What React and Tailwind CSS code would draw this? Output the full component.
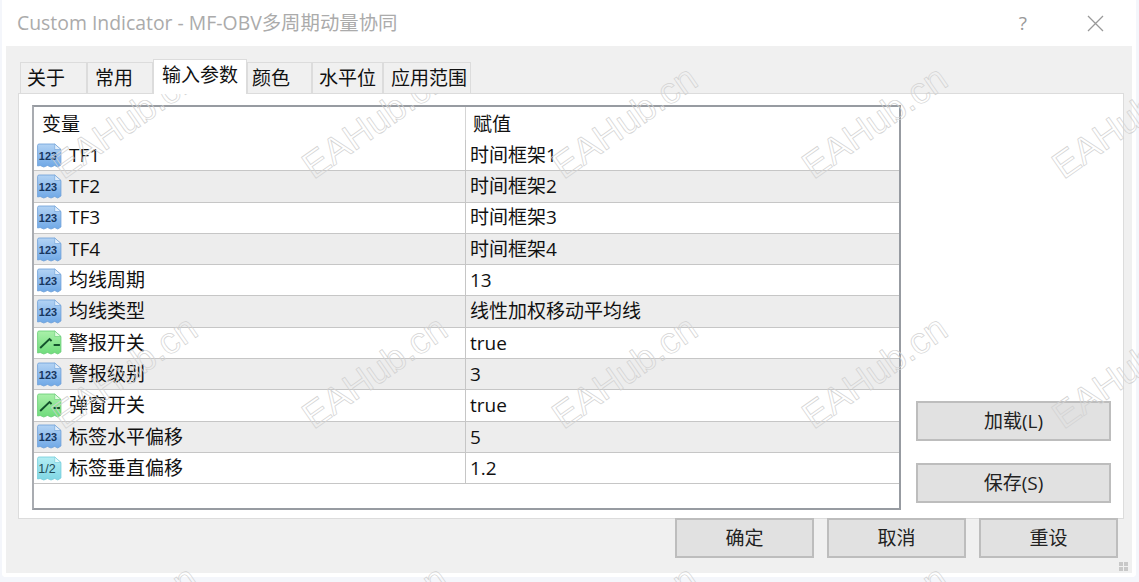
const FONT = "font-['Open_Sans','Noto_Sans_CJK_SC',sans-serif]";

const rows = [
  ['TF1', '时间框架1', 'num'],
  ['TF2', '时间框架2', 'num'],
  ['TF3', '时间框架3', 'num'],
  ['TF4', '时间框架4', 'num'],
  ['均线周期', '13', 'num'],
  ['均线类型', '线性加权移动平均线', 'num'],
  ['警报开关', 'true', 'bool'],
  ['警报级别', '3', 'num'],
  ['弹窗开关', 'true', 'bool'],
  ['标签水平偏移', '5', 'num'],
  ['标签垂直偏移', '1.2', 'frac'],
];

const tabs = [
  { label: '关于', cls: 'w-[67px] pl-[6px]' },
  { label: '常用', cls: 'w-[66px] pl-[7px]' },
  { label: '输入参数', cls: 'w-[94px] pl-[8px]', active: true },
  { label: '颜色', cls: 'w-[65px] pl-[4px]' },
  { label: '水平位', cls: 'w-[71px] pl-[6px]' },
  { label: '应用范围', cls: 'w-[88px] pl-[7px]' },
];

const marks = [
  [67, 148], [317, 148], [567, 148], [817, 148], [1067, 148],
  [67, 398], [317, 398], [567, 398], [817, 398], [1067, 398],
  [67, 648], [317, 648], [567, 648], [817, 648],
];

const iconColors = {
  num: { top: '#b3d3f4', bottom: '#6fa8e6', edge: '#6d9fd8', fold: '#e2eefb', ink: '#17365f' },
  bool: { top: '#a9f0a9', bottom: '#6fdc7c', edge: '#66cc74', fold: '#e2fbe2', ink: '#14532d' },
  frac: { top: '#b4eef4', bottom: '#7fd6e4', edge: '#72ccda', fold: '#e4f9fb', ink: '#1f4a56' },
};

function ParamIcon({ type }) {
  const c = iconColors[type];
  const gid = `grad-${type}`;
  return (
    <svg width="28" height="27" viewBox="0 0 27 27" preserveAspectRatio="none" className="shrink-0">
      <defs>
        <linearGradient id={gid} x1="0" y1="0" x2="0" y2="1">
          <stop offset="0" stopColor={c.top} />
          <stop offset="1" stopColor={c.bottom} />
        </linearGradient>
      </defs>
      <path
        d="M2.5 3.5 Q2.5 2 4 2 H19 L25 7.5 V23 L22 25 L19 23.5 L15.5 25 L12 23.5 L8.5 25 L5 23.5 L2.5 24 Z"
        fill={`url(#${gid})`}
        stroke={c.edge}
        strokeWidth="0.8"
      />
      <path d="M19 2 V7.5 H25 Z" fill={c.fold} stroke={c.edge} strokeWidth="0.6" />
      {type === 'num' && (
        <text x="12.5" y="18" textAnchor="middle" fontSize="10.5" fontWeight="700" fill={c.ink} fontFamily="Liberation Sans, sans-serif">
          123
        </text>
      )}
      {type === 'frac' && (
        <text x="11.5" y="18" textAnchor="middle" fontSize="12" fill={c.ink} fontFamily="Liberation Sans, sans-serif">
          1/2
        </text>
      )}
      {type === 'bool' && (
        <path d="M5 19 L14 10 L16 12 M18 16 H24" fill="none" stroke={c.ink} strokeWidth="1.8" />
      )}
    </svg>
  );
}

function Btn({ label, className }) {
  return (
    <div className={`flex h-[40px] items-center justify-center border-2 border-[#bdbdbd] bg-[#e1e1e1] text-[19px] text-[#222] ${className}`}>
      {label}
    </div>
  );
}

export default function App() {
  return (
    <div className={`relative h-[582px] w-[1139px] overflow-hidden bg-[#f4f6fb] pl-[2px] ${FONT}`}>
      <div className="h-[577px] w-[1134px] rounded-b-[4px] border-x-4 border-b-4 border-white bg-[#f0f0f0]">
        <div className="flex h-[46px] items-center justify-between bg-white pl-[11px] pr-[28px]">
          <span className="text-[19.4px] text-[#ababab]">Custom Indicator - MF-OBV多周期动量协同</span>
          <div className="flex items-center gap-[60px]">
            <span className="text-[19px] text-[#999]">?</span>
            <svg width="17" height="17" viewBox="0 0 17 17" fill="none" stroke="#999" strokeWidth="1.3">
              <path d="M1 1 L16 16 M16 1 L1 16" />
            </svg>
          </div>
        </div>

        <div className="px-[12px]">
          {/* tab strip */}
          <div className="relative z-10 flex h-[47px] items-end pl-[2px]">
            {tabs.map((t) =>
              t.active ? (
                <div key={t.label} className={`-mb-px flex h-[35px] items-center border border-b-0 border-[#dcdcdc] bg-white pb-[4px] text-[19px] text-[#111] ${t.cls}`}>
                  {t.label}
                </div>
              ) : (
                <div key={t.label} className={`flex h-[31px] items-center border border-b-0 border-[#dcdcdc] bg-[#f0f0f0] text-[19px] text-[#111] ${t.cls}`}>
                  {t.label}
                </div>
              )
            )}
          </div>

          {/* panel */}
          <div className="flex h-[426px] w-[1106px] border border-[#dcdcdc] bg-white pl-[13px] pt-[11px]">
            <div className="h-[405px] w-[869px] border-2 border-t-[#979ba1] border-r-[#979ba1] border-b-[#979ba1] border-l-[#a9acb1]">
              <div className="flex h-[33px] text-[19px] text-[#111]">
                <div className="w-[431px] pl-[8px] pt-[3px]">变量</div>
                <div className="border-l border-[#d5d5d5] pl-[7px] pt-[3px]">赋值</div>
              </div>
              {rows.map(([name, value, type], i) => (
                <div key={name} className={`flex h-[31.3px] items-center border-b border-[#c6c6c6] text-[19px] text-[#111] ${i % 2 ? 'bg-[#ededed]' : 'bg-white'}`}>
                  <div className="flex h-full w-[431px] items-center gap-[6px] pl-[1px]">
                    <ParamIcon type={type} />
                    <span>{name}</span>
                  </div>
                  <div className="flex h-full items-center border-l border-[#c6c6c6] pl-[4px]">{value}</div>
                </div>
              ))}
            </div>
            <div className="flex flex-col gap-[22px] pl-[15px] pt-[296px]">
              <Btn label="加载(L)" className="w-[195px]" />
              <Btn label="保存(S)" className="w-[195px]" />
            </div>
          </div>

          {/* dialog buttons */}
          <div className="relative z-10 -mt-px flex justify-end gap-[13px] pr-[2px]">
            <Btn label="确定" className="w-[139px]" />
            <Btn label="取消" className="w-[139px]" />
            <Btn label="重设" className="w-[139px]" />
          </div>
        </div>
      </div>

      {/* size grip */}
      <div className="absolute left-[1119px] top-[562px] grid grid-cols-2 gap-px">
        <span className="size-[4px] bg-[#c8c8c8]" />
        <span className="size-[4px] bg-[#c8c8c8]" />
        <span className="size-[4px] bg-[#c8c8c8]" />
        <span className="size-[4px] bg-[#c8c8c8]" />
      </div>

      {/* watermark */}
      {marks.map(([x, y]) => (
        <span
          key={`${x}-${y}`}
          className="pointer-events-none absolute origin-bottom-left -rotate-[35deg] whitespace-nowrap font-['Liberation_Sans',sans-serif] text-[37px] leading-none text-transparent [-webkit-text-stroke:0.7px_#d2d2d2]"
          style={{ left: x, top: y }}
        >
          EAHub.cn
        </span>
      ))}
    </div>
  );
}
